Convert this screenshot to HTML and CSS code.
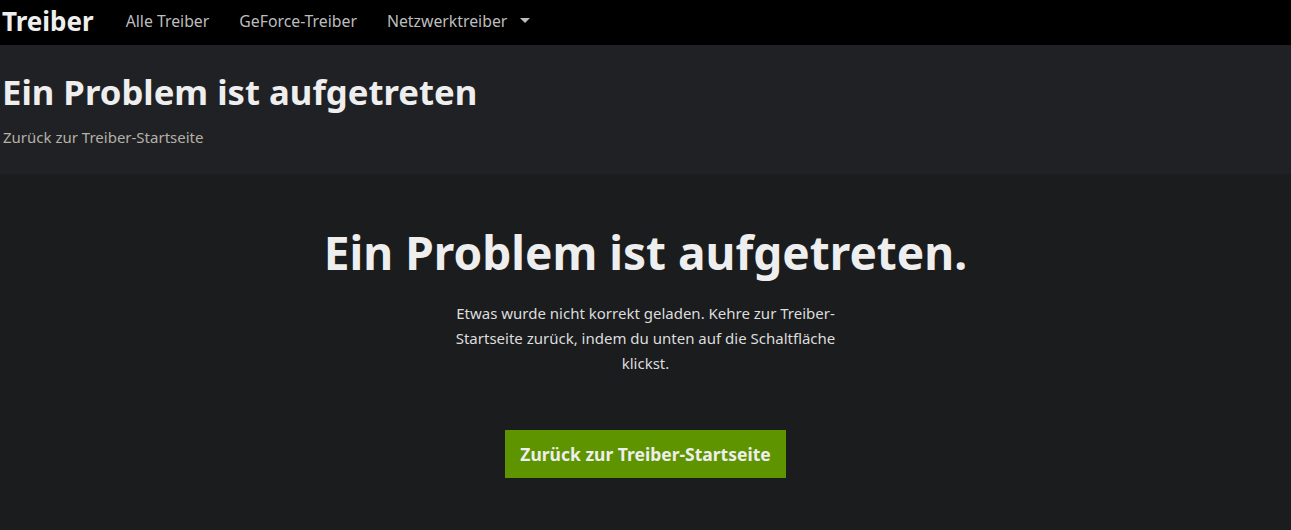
FILE: index.html
```html
<!DOCTYPE html>
<html lang="de">

<head>
    <meta charset="utf-8">
    <meta name="viewport" content="width=device-width, initial-scale=1.0">
    <title>Treiber</title>
    <link rel="stylesheet" href="styles.css">
</head>

<body>
    <header class="topbar">
        <a class="brand" href="#">Treiber</a>
        <!--Hauptmenü-->
        <nav>
            <ul>
                <li><a href="#">Alle Treiber</a></li>
                <li><a href="#">GeForce-Treiber</a></li>
                <li class="dropdown"><a href="#">Netzwerktreiber</a><span class="caret"></span></li>
            </ul>
        </nav>
    </header>

    <section class="pagehead">
        <h1>Ein Problem ist aufgetreten</h1>
        <a class="backlink" href="#">Zurück zur Treiber-Startseite</a>
    </section>

    <!--Fehlermeldung-->
    <main class="error">
        <h2>Ein Problem ist aufgetreten.</h2>
        <p>Etwas wurde nicht korrekt geladen. Kehre zur Treiber-Startseite zurück, indem du unten auf die Schaltfläche klickst.</p>
        <a class="btn" href="#">Zurück zur Treiber-Startseite</a>
    </main>
</body>

</html>
```

FILE: styles.css
```css
body {
    margin: 0;
    background-color: #1b1c1e;
    font-family: "Noto Sans", sans-serif;
    color: #eeeeee;
}

a {
    text-decoration: none;
}

/* TOPBAR */

.topbar {
    background-color: #000;
    height: 45px;
    box-sizing: border-box;
    padding-bottom: 4px;
    display: flex;
    align-items: center;
    padding-left: 2px;
}

.brand {
    color: #eeeeee;
    font-size: 26px;
    font-weight: 700;
    margin-right: 32px;
}

ul {
    list-style: none;
    margin: 0;
    padding: 0;
    display: flex;
    gap: 30px;
}

li a {
    color: #bdbdbd;
    font-size: 15.8px;
}

.dropdown {
    display: flex;
    align-items: center;
}

.caret {
    width: 0;
    height: 0;
    border-left: 5px solid transparent;
    border-right: 5px solid transparent;
    border-top: 5px solid #bdbdbd;
    margin-left: 13px;
}

/* SIDENKOPF */

.pagehead {
    background-color: #202124;
    height: 129px;
    padding-left: 3px;
    box-sizing: border-box;
    padding-top: 26px;
}

.pagehead h1 {
    margin: 0 0 0 -1px;
    font-size: 34.7px;
    font-weight: 700;
    color: #eeeeee;
    line-height: 42px;
}

.backlink {
    display: block;
    margin-top: 14px;
    font-size: 15px;
    color: #b5b0a8;
}

/* FEHLER */

.error {
    display: flex;
    flex-direction: column;
    align-items: center;
    padding-top: 48px;
    height: 356px;
    box-sizing: border-box;
}

.error h2 {
    margin: 0;
    font-size: 46px;
    font-weight: 700;
    line-height: 60px;
    color: #eeeeee;
}

.error p {
    margin: 19px 0 0;
    max-width: 400px;
    text-align: center;
    font-size: 15px;
    line-height: 25px;
    color: #dddddd;
}

.btn {
    margin-top: 54px;
    background-color: #5e9400;
    color: #eeeeee;
    font-weight: 700;
    font-size: 17.5px;
    padding: 0 15px;
    height: 48px;
    line-height: 48px;
}
```
